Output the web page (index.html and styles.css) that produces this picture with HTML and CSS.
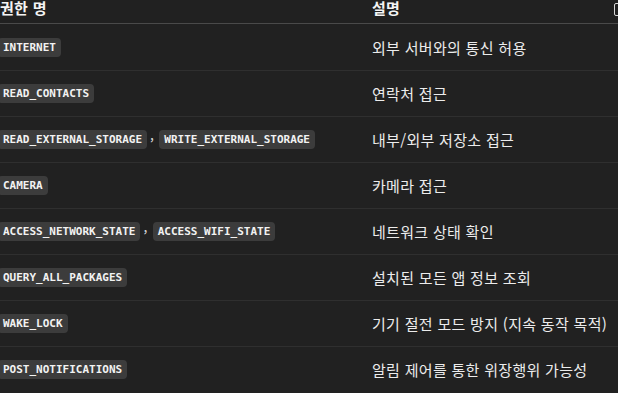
FILE: index.html
```html
<!DOCTYPE html>
<html lang="ko">
<head>
<meta charset="utf-8">
<link rel="stylesheet" href="styles.css">
</head>
<body>
<div class="copy-btn"></div>
<div class="table">
  <div class="row head">
    <div class="cell c1">권한 명</div>
    <div class="cell c2">설명</div>
  </div>
  <div class="row">
    <div class="cell c1"><code>INTERNET</code></div>
    <div class="cell c2">외부 서버와의 통신 허용</div>
  </div>
  <div class="row">
    <div class="cell c1"><code>READ_CONTACTS</code></div>
    <div class="cell c2">연락처 접근</div>
  </div>
  <div class="row">
    <div class="cell c1"><code>READ_EXTERNAL_STORAGE</code><span class="comma">,</span><code>WRITE_EXTERNAL_STORAGE</code></div>
    <div class="cell c2">내부/외부 저장소 접근</div>
  </div>
  <div class="row">
    <div class="cell c1"><code>CAMERA</code></div>
    <div class="cell c2">카메라 접근</div>
  </div>
  <div class="row">
    <div class="cell c1"><code>ACCESS_NETWORK_STATE</code><span class="comma">,</span><code>ACCESS_WIFI_STATE</code></div>
    <div class="cell c2">네트워크 상태 확인</div>
  </div>
  <div class="row">
    <div class="cell c1"><code>QUERY_ALL_PACKAGES</code></div>
    <div class="cell c2">설치된 모든 앱 정보 조회</div>
  </div>
  <div class="row">
    <div class="cell c1"><code>WAKE_LOCK</code></div>
    <div class="cell c2">기기 절전 모드 방지 (지속 동작 목적)</div>
  </div>
  <div class="row">
    <div class="cell c1"><code>POST_NOTIFICATIONS</code></div>
    <div class="cell c2">알림 제어를 통한 위장행위 가능성</div>
  </div>
</div>
</body>
</html>
```

FILE: styles.css
```css
html, body {
  margin: 0;
  padding: 0;
  background: #212121;
  overflow: hidden;
  width: 618px;
  height: 393px;
}
body {
  font-family: "Noto Sans CJK KR", "Noto Sans", sans-serif;
  font-size: 15px;
  letter-spacing: 0.3px;
  color: #ececec;
  position: relative;
}
.table {
  display: flex;
  flex-direction: column;
}
.row {
  display: grid;
  grid-template-columns: 372px 1fr;
  height: 46px;
  border-top: 1px solid #2f2f2f;
  box-sizing: border-box;
  align-items: center;
}
.row.head {
  height: 24px;
  border-top: none;
  border-bottom: 1px solid #4a4a4a;
  font-weight: 700;
  color: #f4f4f4;
  align-items: start;
  line-height: 16px;
  padding-top: 0;
}
.row.head + .row {
  border-top: none;
}
.cell {
  display: flex;
  align-items: center;
  white-space: nowrap;
}
code {
  font-family: "DejaVu Sans Mono", "Liberation Mono", monospace;
  font-size: 11px;
  font-weight: 700;
  letter-spacing: 0;
  line-height: 19px;
  background: #3c3c3c;
  color: #f2f2f2;
  border-radius: 4px;
  padding: 0 5px;
}
.c1 > code:first-child {
  margin-left: -2px;
}
.comma {
  font-size: 14px;
  color: #d8d8d8;
  margin: 0 5px 0 3px;
  align-self: flex-end;
  padding-bottom: 11px;
}
.copy-btn {
  position: absolute;
  left: 614px;
  top: 3px;
  width: 10px;
  height: 11px;
  border: 1.5px solid #d8d8d8;
  border-radius: 2px;
}
```
